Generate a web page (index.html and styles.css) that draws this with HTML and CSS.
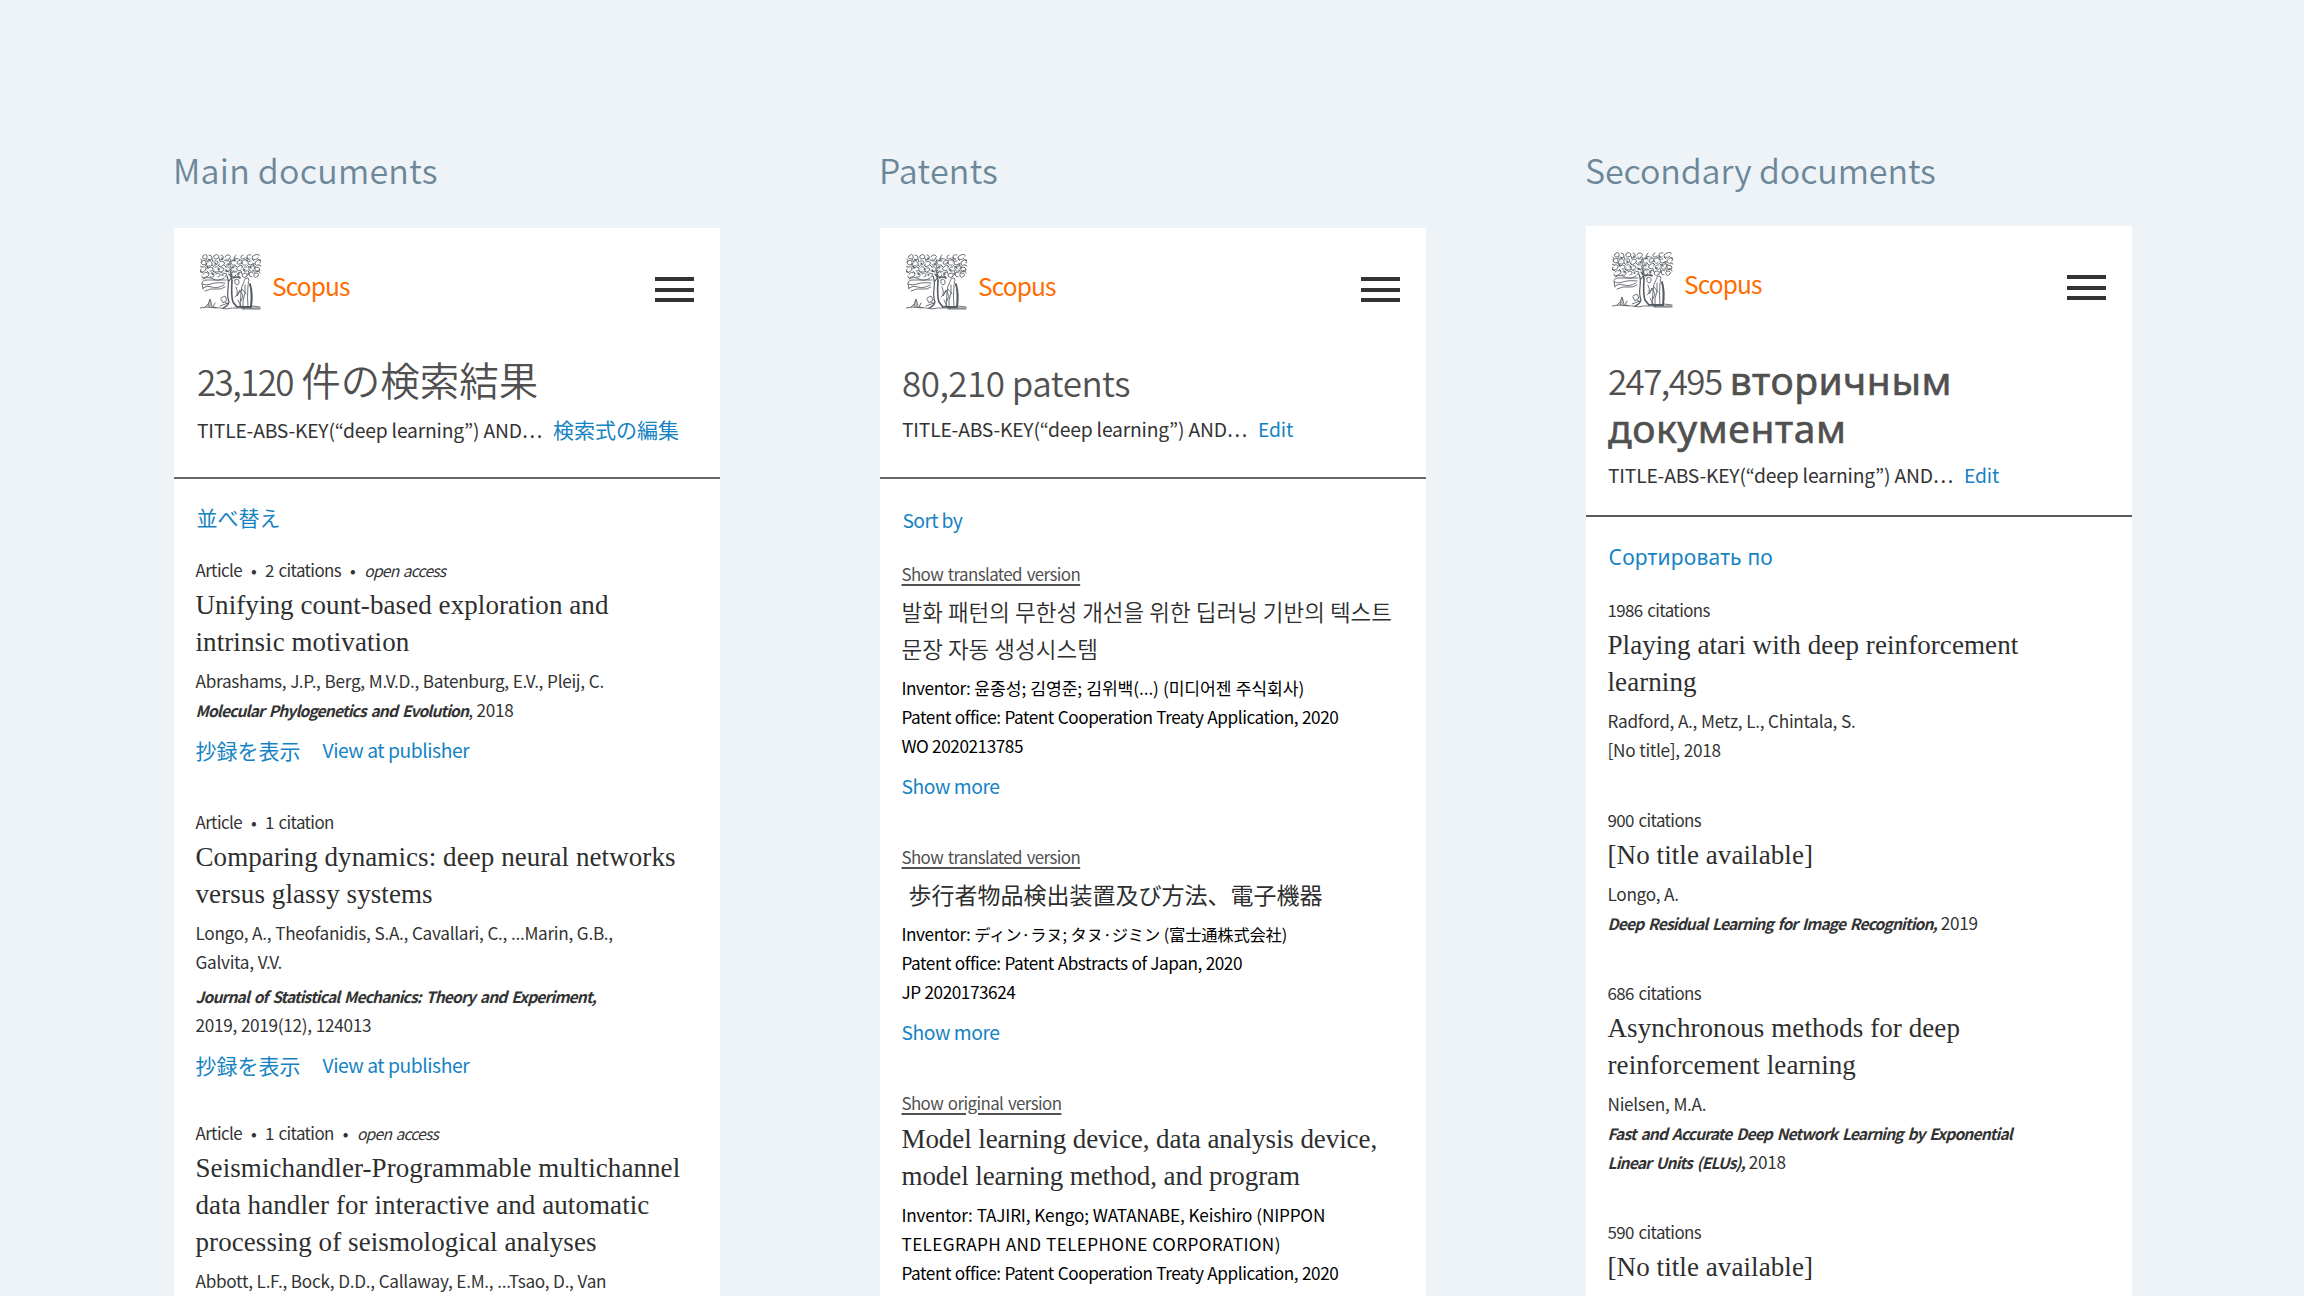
FILE: index.html
```html
<!DOCTYPE html>
<html lang="en">
<head>
<meta charset="utf-8">
<title>Scopus search results</title>
<link rel="stylesheet" href="styles.css">
</head>
<body>
<svg class="defs" width="0" height="0" aria-hidden="true">
  <defs>
    <symbol id="tree" viewBox="0 0 62 56">
      <g fill="none" stroke="#555a60" stroke-width=".85" stroke-linecap="round">
        <g id="foliage">
          <path d="M3 2q3-3 4 0t-3 3q-3-1-1-3M9 1q3 0 3 3t-4 1M14 2q2-3 5 0q0 3-3 3t-2-3M21 1q3 0 2 4l-3 1M25 3q1-3 4-2t0 4-3 0M1 8q2-3 5-1q1 4-2 4t-3-3M8 7q3-1 4 2t-3 3-2-3M14 7q3-1 4 1q-1 4-4 3M20 8q2-2 4 0t-2 4-3-2M27 7q3-1 3 2t-4 2M2 13q3-1 4 1t-3 4-2-3M8 14q3-2 5 0q0 4-3 3M15 13q3-1 4 2t-3 3-2-2M21 14q3-1 3 1t-3 3M26 13q3-1 4 2t-3 2M3 20q2-3 5-1t-2 4-4-1M11 19q3-1 3 2t-4 2M16 20q3-2 4 0t-2 3M23 19l4 1-2 3"/>
          <path d="M6 5l2 3M12 5l1 3M19 4l1 3M24 6l2 1M5 11l3 2M12 11l2 2M18 11l2 2M24 11l2 2M7 17l2 2M13 17l3 2M19 17l3 2M1 5l1 2M0 12l2 1M1 17l2 2M30 5l1 3M30 12l1 2M25 17l4 1"/>
        </g>
        <use href="#foliage" transform="matrix(-1 0 0 -1 61 24)"/>
        <path stroke-width="1.3" d="M9 6h1M15 9l1 1M22 4v1M28 10h1M34 5l1 1M41 9h1M47 4l1 1M53 10h1M7 13l1 1M18 15h1M26 16l1 1M33 13v1M44 16h1M50 13l1 1M57 17h1M12 20h1M22 21h1M38 20h1M48 20h1M31 18v4M29 20l2 3"/>
        <path d="M3 25q5-3 10 0t11-1M2 29q0-3 5-3t10 0 9 0M2 30q4 2 9 0t14-1M3 34q4-3 9-1t12-2M5 37q6-3 11-2t9-2M2 30l1 5"/>
        <path stroke-width="1.2" d="M27 22q2 5 1 13t1 13q-1 4-6 6M32 21q-1 4 0 6M29 27l3-4"/>
        <path stroke-width="1.6" d="M33 24q4-2 7 0M32 26q-1 17 1 22l4 5q4-1 7 1"/>
        <path d="M35 26q3-2 4 1t-2 4q-3-1-2-5M36 33q2 3 1 9l3-5M35 43q3-2 5-7l3 6-2 5M38 46l3 6"/>
        <path d="M44 27q1-4 4-3 2 2 0 5 3 2 3 8v17M44 28q-3 4-3 11l-1 14M45 31v8q-3 8-2 15M48 31q-1 13 0 23M46 40l-4-5"/>
        <path stroke-width="1.8" d="M50 30q3 10 1 23M41 53h9"/>
        <path d="M21 44l4-2 2 4-4 3-2-4M25 48l3 2M20 52l8-3M8 53q0-4 2-8 2 5 2 8M10 47v6M13 53l2-4M5 53l3-3M0 54l7-1 9 1M13 53l6 1M20 54q6 2 12 0M33 54h27M42 55h18M52 52l8 1"/>
      </g>
    </symbol>
  </defs>
</svg>

<main class="board">
  <section class="column">
    <h2 class="label">Main documents</h2>
    <article class="card">
      <header class="brand">
        <svg class="tree"><use href="#tree"/></svg><span class="name">Scopus</span>
        <div class="menu"><i></i><i></i><i></i></div>
      </header>
      <div class="summary">
        <h1><span class="num">23,120</span> <span class="ja">件の検索結果</span></h1>
        <p class="query">TITLE-ABS-KEY(“deep learning”) AND… <a class="ja">検索式の編集</a></p>
      </div>
      <div class="results">
        <a class="sort ja">並べ替え</a>
        <div class="item">
          <p class="meta">Article<b>•</b>2 citations<b>•</b><em>open access</em></p>
          <h3>Unifying count-based exploration and<br>intrinsic motivation</h3>
          <p class="info">Abrashams, J.P., Berg, M.V.D., Batenburg, E.V., Pleij, C.</p>
          <p class="info"><cite>Molecular Phylogenetics and Evolution</cite>, 2018</p>
          <p class="links"><a class="ja">抄録を表示</a><a>View at publisher</a></p>
        </div>
        <div class="item">
          <p class="meta">Article<b>•</b>1 citation</p>
          <h3>Comparing dynamics: deep neural networks<br>versus glassy systems</h3>
          <p class="info">Longo, A., Theofanidis, S.A., Cavallari, C., ...Marin, G.B.,<br>Galvita, V.V.</p>
          <p class="info spaced"><cite>Journal of Statistical Mechanics: Theory and Experiment,</cite><br>2019, 2019(12), 124013</p>
          <p class="links"><a class="ja">抄録を表示</a><a>View at publisher</a></p>
        </div>
        <div class="item near">
          <p class="meta">Article<b>•</b>1 citation<b>•</b><em>open access</em></p>
          <h3>Seismichandler-Programmable multichannel<br>data handler for interactive and automatic<br>processing of seismological analyses</h3>
          <p class="info">Abbott, L.F., Bock, D.D., Callaway, E.M., ...Tsao, D., Van</p>
        </div>
      </div>
    </article>
  </section>

  <section class="column patents">
    <h2 class="label">Patents</h2>
    <article class="card">
      <header class="brand">
        <svg class="tree"><use href="#tree"/></svg><span class="name">Scopus</span>
        <div class="menu"><i></i><i></i><i></i></div>
      </header>
      <div class="summary">
        <h1>80,210 patents</h1>
        <p class="query">TITLE-ABS-KEY(“deep learning”) AND… <a>Edit</a></p>
      </div>
      <div class="results">
        <a class="sort">Sort by</a>
        <div class="item">
          <p class="meta"><u>Show translated version</u></p>
          <h3 class="ko">발화 패턴의 무한성 개선을 위한 딥러닝 기반의 텍스트<br>문장 자동 생성시스템</h3>
          <p class="info">Inventor: <span class="kor">윤종성; 김영준; 김위백(...) (미디어젠 주식회사)</span><br>Patent office: Patent Cooperation Treaty Application, 2020<br>WO 2020213785</p>
          <p class="links"><a>Show more</a></p>
        </div>
        <div class="item">
          <p class="meta"><u>Show translated version</u></p>
          <h3 class="jp">歩行者物品検出装置及び方法、電子機器</h3>
          <p class="info">Inventor: <span class="kana">ディン·ラヌ; タヌ·ジミン (富士通株式会社)</span><br>Patent office: Patent Abstracts of Japan, 2020<br>JP 2020173624</p>
          <p class="links"><a>Show more</a></p>
        </div>
        <div class="item">
          <p class="meta"><u>Show original version</u></p>
          <h3>Model learning device, data analysis device,<br>model learning method, and program</h3>
          <p class="info"><span class="upper">Inventor: TAJIRI, Kengo; WATANABE, Keishiro (NIPPON</span><br><span class="wide">TELEGRAPH AND TELEPHONE CORPORATION)</span><br>Patent office: Patent Cooperation Treaty Application, 2020</p>
        </div>
      </div>
    </article>
  </section>

  <section class="column secondary">
    <h2 class="label">Secondary documents</h2>
    <article class="card">
      <header class="brand">
        <svg class="tree"><use href="#tree"/></svg><span class="name">Scopus</span>
        <div class="menu"><i></i><i></i><i></i></div>
      </header>
      <div class="summary">
        <h1><span class="num">247,495</span> <span class="ru">вторичным<br>документам</span></h1>
        <p class="query">TITLE-ABS-KEY(“deep learning”) AND… <a>Edit</a></p>
      </div>
      <div class="results">
        <a class="sort ru">Сортировать по</a>
        <div class="item">
          <p class="meta">1986 citations</p>
          <h3>Playing atari with deep reinforcement<br>learning</h3>
          <p class="info">Radford, A., Metz, L., Chintala, S.<br>[No title], 2018</p>
        </div>
        <div class="item">
          <p class="meta">900 citations</p>
          <h3>[No title available]</h3>
          <p class="info">Longo, A.<br><cite>Deep Residual Learning for Image Recognition,</cite> 2019</p>
        </div>
        <div class="item">
          <p class="meta">686 citations</p>
          <h3>Asynchronous methods for deep<br>reinforcement learning</h3>
          <p class="info">Nielsen, M.A.<br><cite>Fast and Accurate Deep Network Learning by Exponential<br>Linear Units (ELUs),</cite> 2018</p>
        </div>
        <div class="item">
          <p class="meta">590 citations</p>
          <h3>[No title available]</h3>
        </div>
      </div>
    </article>
  </section>
</main>
</body>
</html>
```
FILE: styles.css
```css
* { box-sizing: border-box; margin: 0; padding: 0; }
body {
  height: 1296px;
  overflow: hidden;
  background: #edf3f6;
  color: #333;
  font-family: "Noto Sans CJK JP", "Noto Sans", sans-serif;
  font-size: 17.2px;
  white-space: nowrap;
}
.defs { position: absolute; }

.board { display: flex; gap: 160px; height: 1296px; padding: 144px 174px 0; overflow: hidden; }
.column { display: flex; flex-direction: column; flex: none; width: 546px; }
.label { flex: none; height: 84px; margin-left: -1px; padding-top: 2px; font-size: 34px; font-weight: 350; line-height: 48px; letter-spacing: .25px; color: #6c8799; }
.card { flex: none; height: 1200px; background: #fff; }

.brand { display: flex; align-items: flex-start; height: 129px; padding: 26px 26px 0; }
.tree { width: 62px; height: 56px; }
.name { margin: 13px auto 0 10px; font-size: 24.5px; line-height: 37px; letter-spacing: -.9px; color: #ff6c00; }
.menu { display: grid; gap: 6.5px; width: 39px; margin-top: 23px; }
.menu i { height: 4px; background: #333; }

.summary { height: 122px; padding-left: 23px; border-bottom: 2px solid #666; }
h1 { font-size: 35px; font-weight: 350; line-height: 48px; letter-spacing: -.5px; color: #505050; }
h1 .num { margin-right: 1px; letter-spacing: -1.6px; }
h1 .ja { font-size: 39.5px; line-height: 40px; letter-spacing: 0; }
.query { margin-top: 10px; font-size: 19.3px; line-height: 29px; letter-spacing: -.19px; }
a { color: #1583c3; }
.query a { margin-left: 7px; }
.ja, .query .ja { font-size: 21px; letter-spacing: 0; }

.results { padding: 23px 21.5px 0; }
.sort { display: block; margin-bottom: 22.5px; padding-left: 1px; font-size: 19.3px; line-height: 30px; letter-spacing: -.65px; }
.sort.ja { font-size: 21px; letter-spacing: 0; }
.item + .item { margin-top: 42px; }
.item + .near { margin-top: 38.5px; }
.meta, .info { line-height: 29px; }
.meta { font-size: 16.9px; letter-spacing: -.6px; word-spacing: 1.5px; }
.info { letter-spacing: -.3px; word-spacing: .4px; }
.meta b { margin: 0 9px; font-weight: 400; line-height: 1; }
.meta em { font-size: 15.6px; line-height: 1; letter-spacing: -.75px; }
.meta u { color: #505050; text-underline-offset: 3px; text-decoration-thickness: 1.5px; }
h3 { margin: 3px 0 5px; font-family: "Liberation Serif", serif; font-size: 27px; font-weight: 400; line-height: 37px; letter-spacing: .08px; color: #2e2e2e; }
.spaced { margin-top: 5px; }
cite { font-size: 15.6px; font-weight: 700; font-style: italic; line-height: 1; letter-spacing: -.85px; word-spacing: 2px; }
.links { display: flex; gap: 22px; margin-top: 11px; font-size: 19.3px; line-height: 30px; letter-spacing: -.45px; }
.links .ja { letter-spacing: 0; }

.patents .summary { padding-top: 1px; padding-left: 22px; }
.patents .query { margin-top: 9px; }
.patents .sort { margin-bottom: 24.5px; padding-top: 2.5px; }
.patents .info { color: #000; letter-spacing: -.45px; }
.patents .item + .item { margin-top: 41px; }
.patents h3 { margin-top: 4.5px; letter-spacing: -.08px; }
.patents .ko { margin: 5px 0 6px; font-family: "Noto Sans CJK KR", sans-serif; font-size: 22.5px; font-weight: 350; letter-spacing: 0; }
.patents .jp { margin: 5px 0 5.5px; padding-left: 7px; font-family: "Noto Sans CJK JP", sans-serif; font-size: 23px; letter-spacing: 0; }
.kor { font-family: "Noto Sans CJK KR", sans-serif; letter-spacing: -.1px; line-height: 1; }
.kana { font-size: 16.3px; line-height: 1; letter-spacing: -.2px; }
.upper { letter-spacing: -.2px; }
.wide { letter-spacing: .35px; }

.secondary .label { height: 82px; letter-spacing: -.1px; }
.secondary .brand { height: 130px; }
.secondary .summary { height: 161px; padding-left: 22px; border-color: #5a5a5a; }
h1 .ru { font-family: "Noto Sans", sans-serif; font-size: 39px; font-weight: 400; letter-spacing: .6px; -webkit-text-stroke: .6px #505050; }
.secondary .query { margin-top: 9px; }
.secondary .sort { margin-bottom: 23px; padding-top: 2px; }
.secondary .sort.ru { font-family: "Noto Sans", sans-serif; font-size: 21px; letter-spacing: .2px; }
.secondary .item + .item { margin-top: 41px; }
```
